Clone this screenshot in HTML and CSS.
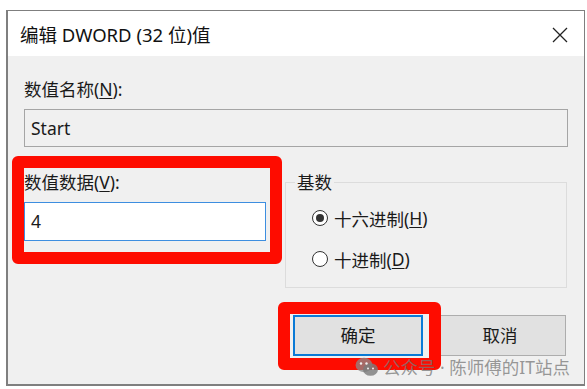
FILE: index.html
```html
<!DOCTYPE html>
<html lang="zh-CN">
<head>
    <meta charset="UTF-8">
    <title>编辑 DWORD (32 位)值</title>
    <link rel="stylesheet" href="styles.css">
</head>
<body>

<div class="window">
    <div class="titlebar">
        <span class="title">编辑 DWORD (32 位)值</span>
        <svg class="close" width="16" height="16" viewBox="0 0 16 16">
            <path d="M1 1 L15 15 M15 1 L1 15" stroke="#222" stroke-width="1.3" fill="none"/>
        </svg>
    </div>

    <div class="content">
        <div class="label">数值名称(<u>N</u>):</div>
        <div class="textbox disabled">Start</div>

        <div class="row">
            <div class="datacol">
                <div class="label">数值数据(<u>V</u>):</div>
                <div class="textbox active">4</div>
                <div class="mark mark-data"></div>
            </div>

            <fieldset class="group">
                <legend>基数</legend>
                <div class="radio"><span class="dot checked"></span>十六进制(<u>H</u>)</div>
                <div class="radio"><span class="dot"></span>十进制(<u>D</u>)</div>
            </fieldset>
        </div>

        <div class="buttons">
            <div class="btnwrap">
                <div class="btn default">确定</div>
                <div class="mark mark-ok"></div>
            </div>
            <div class="btn">取消</div>
        </div>
    </div>

    <div class="watermark">
        <svg width="24" height="20" viewBox="0 0 24 20">
            <ellipse cx="9" cy="8" rx="8.5" ry="7.2" fill="#8a8a8a" opacity="0.75"/>
            <ellipse cx="15.5" cy="12.5" rx="7.5" ry="6.3" fill="#7a7a7a" opacity="0.8"/>
            <circle cx="6" cy="6.5" r="1.2" fill="#eee"/>
            <circle cx="11.5" cy="6.5" r="1.2" fill="#eee"/>
            <circle cx="13" cy="11.5" r="1" fill="#eee"/>
            <circle cx="18" cy="11.5" r="1" fill="#eee"/>
        </svg>
        <span>公众号 · 陈师傅的IT站点</span>
    </div>
</div>

</body>
</html>
```

FILE: styles.css
```css
body {
    margin: 0;
    background: #ffffff;
    font-family: "Noto Sans", "Noto Sans CJK SC", sans-serif;
    color: #1a1a1a;
}
.window {
    position: relative;
    margin: 10px 0 0 6px;
    width: 576px;
    height: 373px;
    border: 1px solid #7f7f7f;
    border-left-width: 2px;
    border-bottom-width: 2px;
    background: #f0f0f0;
}
.titlebar {
    height: 45px;
    background: #ffffff;
    display: flex;
    align-items: center;
    justify-content: space-between;
    padding: 0 16px 0 12px;
}
.title {
    font-size: 18.5px;
    color: #111;
}
.close {
    margin-top: 2px;
}
.content {
    padding: 22px 16px 0 16px;
    font-size: 17.5px;
}
.label {
    height: 22px;
    line-height: 22px;
}
u {
    text-decoration-thickness: 1px;
    text-underline-offset: 2px;
}
.textbox {
    box-sizing: border-box;
    margin-top: 9px;
    height: 38px;
    line-height: 36px;
    padding-left: 6px;
    border: 1px solid #a5a5a5;
}
.textbox.disabled {
    background: #f0f0f0;
}
.textbox.active {
    background: #ffffff;
    border-color: #3d8ee0;
    height: 39px;
    line-height: 37px;
}
.row {
    display: flex;
    align-items: flex-start;
    margin-top: 24px;
}
.datacol {
    position: relative;
    width: 242px;
}
.mark {
    position: absolute;
    border: 12px solid #fe0c00;
    border-radius: 6px;
    z-index: 2;
}
.mark-data {
    top: -15px;
    left: -12px;
    right: -16px;
    bottom: -23px;
}
.group {
    margin: 0 0 0 19px;
    padding: 14px 0 0 26px;
    width: 282px;
    box-sizing: border-box;
    height: 117px;
    border: 1px solid #dcdcdc;
}
.group legend {
    padding: 0 2px;
    margin-left: -17px;
    line-height: 22px;
}
.radio {
    display: flex;
    align-items: center;
    height: 22px;
    margin-bottom: 19px;
}
.dot {
    box-sizing: border-box;
    width: 16px;
    height: 16px;
    border: 1px solid #333;
    border-radius: 50%;
    background: #fff;
    margin-right: 6px;
    position: relative;
}
.dot.checked::after {
    content: "";
    position: absolute;
    left: 3px;
    top: 3px;
    width: 8px;
    height: 8px;
    border-radius: 50%;
    background: #333;
}
.buttons {
    display: flex;
    justify-content: flex-end;
    gap: 11px;
    margin: 27px 2px 0 0;
}
.btnwrap {
    position: relative;
}
.btn {
    box-sizing: border-box;
    width: 132px;
    height: 41px;
    line-height: 39px;
    text-align: center;
    background: #e1e1e1;
    border: 1px solid #adadad;
}
.btn.default {
    width: 130px;
    border: 2px solid #0a7ad6;
    line-height: 37px;
}
.mark-ok {
    top: -13px;
    left: -15px;
    right: -18px;
    bottom: -14px;
}
.watermark {
    position: absolute;
    right: 14px;
    top: 343px;
    display: flex;
    align-items: center;
    gap: 4px;
    font-size: 17.5px;
    color: rgba(120, 120, 120, 0.75);
    z-index: 3;
}
```
